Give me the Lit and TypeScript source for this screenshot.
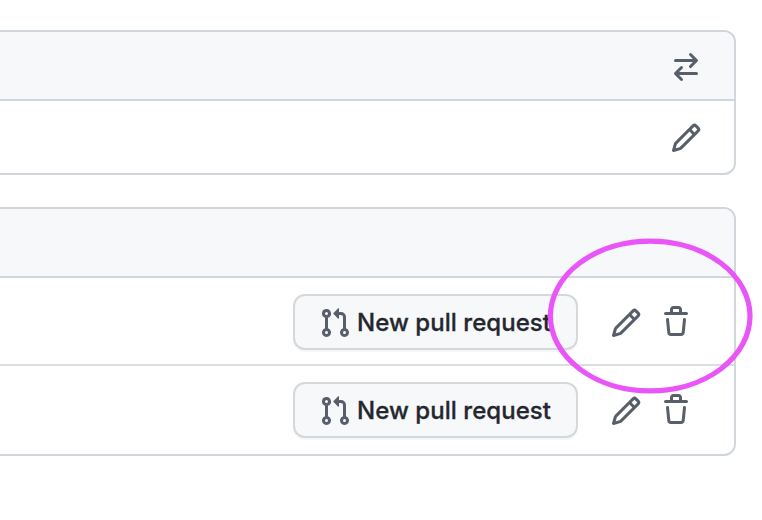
import { LitElement, html, css } from "lit";
import { customElement, property } from "lit/decorators.js";

const ICONS: Record<string, string> = {
  switch:
    "M5.22 14.78a.75.75 0 0 0 1.06-1.06L4.56 12h8.69a.75.75 0 0 0 0-1.5H4.56l1.72-1.72a.75.75 0 0 0-1.06-1.06l-3 3a.75.75 0 0 0 0 1.06l3 3Zm5.56-6.5a.75.75 0 1 1-1.06-1.06l1.72-1.72H2.75a.75.75 0 0 1 0-1.5h8.69L9.72 2.28a.75.75 0 0 1 1.06-1.06l3 3a.75.75 0 0 1 0 1.06l-3 3Z",
  pencil:
    "M11.013 1.427a1.75 1.75 0 0 1 2.474 0l1.086 1.086a1.75 1.75 0 0 1 0 2.474l-8.61 8.61c-.21.21-.47.364-.756.445l-3.251.93a.75.75 0 0 1-.927-.928l.929-3.25c.081-.286.235-.547.445-.758l8.61-8.61Zm.176 4.823L9.75 4.81l-6.286 6.287a.253.253 0 0 0-.064.108l-.558 1.953 1.953-.558a.253.253 0 0 0 .108-.064Zm1.238-3.763a.25.25 0 0 0-.354 0L10.811 3.75l1.439 1.44 1.263-1.263a.25.25 0 0 0 0-.354Z",
  trash:
    "M6.5 1.75a.25.25 0 0 1 .25-.25h2.5a.25.25 0 0 1 .25.25V3h-3V1.75Zm4.5 0V3h2.25a.75.75 0 0 1 0 1.5H2.75a.75.75 0 0 1 0-1.5H5V1.75C5 .784 5.784 0 6.75 0h2.5C10.216 0 11 .784 11 1.75ZM4.496 6.675a.75.75 0 1 0-1.492.15l.66 6.6A1.75 1.75 0 0 0 5.405 15h5.19c.9 0 1.652-.681 1.741-1.576l.66-6.6a.75.75 0 0 0-1.492-.149l-.66 6.6a.25.25 0 0 1-.249.225h-5.19a.25.25 0 0 1-.249-.225l-.66-6.6Z",
  pull:
    "M1.5 3.25a2.25 2.25 0 1 1 3 2.122v5.256a2.251 2.251 0 1 1-1.5 0V5.372A2.25 2.25 0 0 1 1.5 3.25Zm5.677-.177L9.573.677A.25.25 0 0 1 10 .854V2.5h1A2.5 2.5 0 0 1 13.5 5v5.628a2.251 2.251 0 1 1-1.5 0V5a1 1 0 0 0-1-1h-1v1.646a.25.25 0 0 1-.427.177L7.177 3.427a.25.25 0 0 1 0-.354ZM3.75 2.5a.75.75 0 1 0 0 1.5.75.75 0 0 0 0-1.5Zm0 9.5a.75.75 0 1 0 0 1.5.75.75 0 0 0 0-1.5Zm8.25.75a.75.75 0 1 0 1.5 0 .75.75 0 0 0-1.5 0Z",
};

@customElement("line-icon")
export class LineIcon extends LitElement {
  @property() name = "pencil";

  static styles = css`
    :host {
      display: block;
      flex: none;
      width: 32px;
      height: 32px;
      color: #585f6a;
    }
    .glyph {
      display: block;
      fill: currentColor;
    }
  `;

  render() {
    return html`<svg class="glyph" width="32" height="32" viewBox="0 0 16 16" aria-hidden="true">
      <path fill-rule="evenodd" d=${ICONS[this.name]}></path>
    </svg>`;
  }
}

@customElement("branch-row")
export class BranchRow extends LitElement {
  static styles = css`
    :host {
      display: flex;
      justify-content: flex-end;
      align-items: flex-start;
      box-sizing: border-box;
      padding: 16px 42px 0 0;
    }
    .button {
      display: flex;
      align-items: center;
      box-sizing: border-box;
      width: 285px;
      height: 56px;
      margin: 0 32px 0 0;
      padding: 2px 0 0 24px;
      border: 2px solid #d5d8da;
      border-radius: 12px;
      background: #f6f8fa;
      box-shadow: 0 2px 0 rgba(27, 31, 36, 0.04);
      font: 500 24px/36px Inter, "Liberation Sans", sans-serif;
      color: #25272f;
      white-space: nowrap;
    }
    .label {
      margin-left: 6px;
      letter-spacing: 0.04px;
      -webkit-text-stroke: 0.3px #25272f;
    }
    .action {
      margin-top: 12px;
    }
    .edit {
      margin-top: 13px;
      margin-right: 18px;
    }
  `;

  render() {
    return html`
      <button class="button">
        <line-icon name="pull"></line-icon>
        <span class="label">New pull request</span>
      </button>
      <line-icon class="edit" name="pencil"></line-icon>
      <line-icon class="action" name="trash"></line-icon>
    `;
  }
}

@customElement("app-root")
export class AppRoot extends LitElement {
  static styles = css`
    :host {
      display: block;
      position: relative;
      box-sizing: border-box;
      width: 762px;
      height: 520px;
      padding-top: 30px;
      overflow: hidden;
      background: #fff;
    }
    .panel {
      box-sizing: border-box;
      width: 736px;
      margin-bottom: 32px;
      border: 2px solid #d1d6dd;
      border-left: 0;
      border-radius: 0 12px 12px 0;
      overflow: hidden;
    }
    .head,
    .line {
      display: flex;
      justify-content: flex-end;
      align-items: center;
      box-sizing: border-box;
      padding-right: 32px;
    }
    .head {
      height: 69px;
      border-bottom: 2px solid #d1d6dd;
      background: #f6f8fa;
    }
    .switcher {
      height: 69px;
      padding-top: 3px;
    }
    .line {
      height: 72px;
      padding-top: 2px;
    }
    .first {
      height: 88px;
      border-bottom: 2px solid #d9dee3;
    }
    .last {
      height: 88px;
    }
    .ring {
      position: absolute;
      left: 540px;
      top: 230px;
      fill: none;
      stroke: #ea55f8;
      stroke-width: 5.2;
    }
  `;

  render() {
    return html`
      <section class="panel">
        <div class="head switcher"><line-icon name="switch"></line-icon></div>
        <div class="line"><line-icon name="pencil"></line-icon></div>
      </section>
      <section class="panel">
        <div class="head"></div>
        <branch-row class="first"></branch-row>
        <branch-row class="last"></branch-row>
      </section>
      <svg class="ring" width="222" height="170" viewBox="0 0 222 170">
        <ellipse cx="110.2" cy="86" rx="99.8" ry="74.9"></ellipse>
      </svg>
    `;
  }
}
